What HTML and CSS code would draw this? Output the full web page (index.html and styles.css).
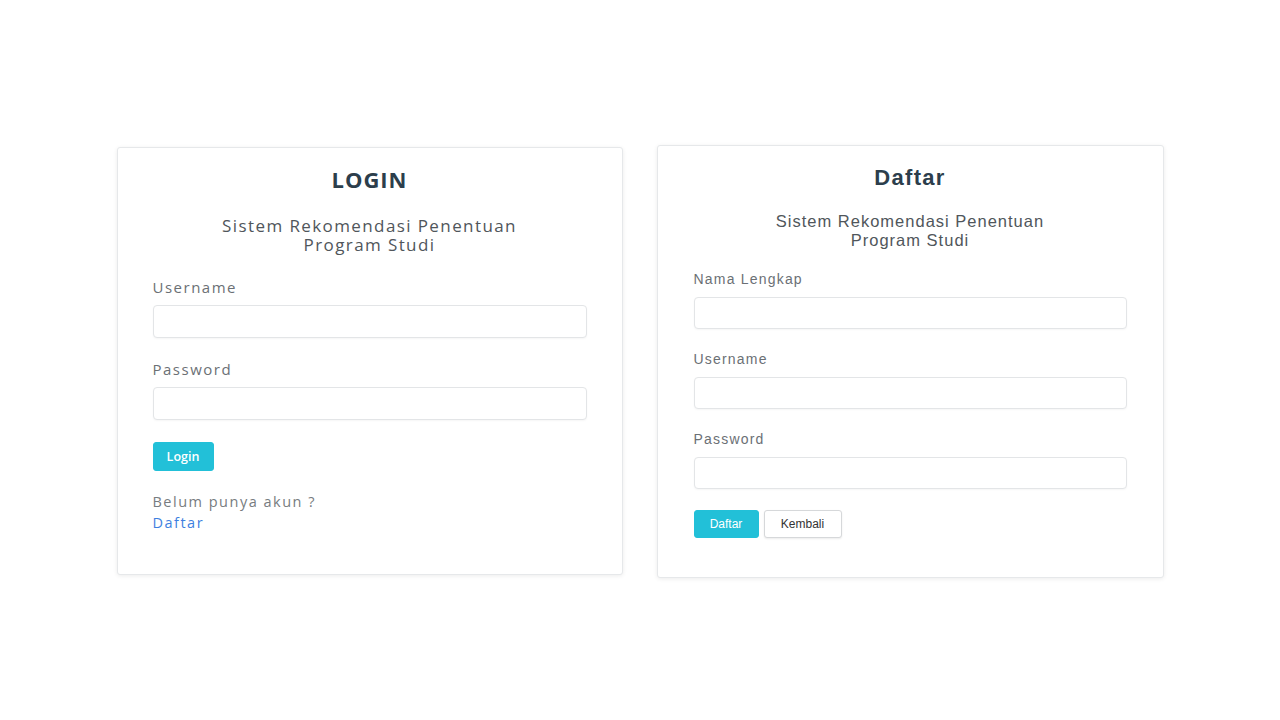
FILE: index.html
```html
<!DOCTYPE html>
<html lang="id">
<head>
    <meta charset="UTF-8">
    <meta name="viewport" content="width=device-width, initial-scale=1.0">
    <title>Login - Sistem Rekomendasi Penentuan Program Studi</title>
    <link rel="stylesheet" href="styles.css">
</head>
<body>

    <div class="page">

        <!-- Login Card -->
        <div class="card card-login">
            <h1 class="card-title">LOGIN</h1>
            <p class="card-sub">Sistem Rekomendasi Penentuan<br>Program Studi</p>

            <label class="field-label">Username</label>
            <input class="field-input" type="text">

            <label class="field-label">Password</label>
            <input class="field-input" type="password">

            <div class="btn-row">
                <button class="btn btn-info">Login</button>
            </div>

            <p class="note">Belum punya akun ?<br><a href="#">Daftar</a></p>
        </div>

        <!-- Register Card -->
        <div class="card card-daftar">
            <h1 class="card-title">Daftar</h1>
            <p class="card-sub">Sistem Rekomendasi Penentuan<br>Program Studi</p>

            <label class="field-label">Nama Lengkap</label>
            <input class="field-input" type="text">

            <label class="field-label">Username</label>
            <input class="field-input" type="text">

            <label class="field-label">Password</label>
            <input class="field-input" type="password">

            <div class="btn-row">
                <button class="btn btn-info">Daftar</button>
                <button class="btn btn-light">Kembali</button>
            </div>
        </div>

    </div>

</body>
</html>
```

FILE: styles.css
```css
/* Base */
body {
    margin: 0;
    padding: 0;
    background-color: #ffffff;
    font-family: 'Open Sans', 'Liberation Sans', sans-serif;
}

.page {
    height: 720px;
    padding-top: 2px;
    box-sizing: border-box;
    display: flex;
    justify-content: center;
    align-items: center;
    gap: 34px;
}

/* Cards */
.card {
    background-color: #ffffff;
    border: 1px solid #e6e8ea;
    border-radius: 3px;
    box-shadow: 0 1px 4px rgba(0, 0, 0, 0.08);
    display: flex;
    flex-direction: column;
    box-sizing: border-box;
}

.card-login {
    width: 506px;
    padding: 18px 35px 41px;
}

.card-daftar {
    width: 507px;
    padding: 19px 36px 39px;
    font-family: 'Liberation Sans', Arial, sans-serif;
}

.card-title {
    margin: 0;
    text-align: center;
    font-size: 22px;
    line-height: 26px;
    font-weight: bold;
    letter-spacing: 1px;
    color: #2c3e4c;
}

.card-daftar .card-title {
    letter-spacing: 1.3px;
}

.card-sub {
    margin: 24px 0 23px;
    text-align: center;
    font-size: 17px;
    line-height: 19px;
    letter-spacing: 1.4px;
    color: #50565b;
}

.card-daftar .card-sub {
    margin: 21px 0 20px;
    font-size: 16.5px;
    letter-spacing: 1px;
}

/* Form fields */
.field-label {
    font-size: 15px;
    line-height: 20px;
    letter-spacing: 1.5px;
    color: #6b7075;
}

.card-daftar .field-label {
    font-size: 14px;
    line-height: 19px;
    letter-spacing: 1.2px;
}

.field-input {
    margin: 8px 0 21px;
    height: 33px;
    padding: 0 10px;
    border: 1px solid #e3e5e7;
    border-radius: 4px;
    box-sizing: border-box;
    box-shadow: 0 1px 2px rgba(0, 0, 0, 0.04);
    width: 100%;
}

.card-daftar .field-input {
    height: 32px;
    margin: 8px 0 21px;
}

/* Buttons */
.btn-row {
    display: flex;
    gap: 5px;
    margin-top: 1px;
}

.card-daftar .btn-row {
    margin-top: 0;
}

.btn {
    font-family: inherit;
    font-size: 12.5px;
    height: 29px;
    padding: 0 13px;
    border-radius: 3px;
    cursor: pointer;
}

.card-login .btn-info {
    width: 61px;
    font-weight: 600;
}

.card-daftar .btn {
    height: 28px;
    font-size: 12px;
}

.btn-info {
    background-color: #22c0d8;
    border: 1px solid #22c0d8;
    color: #ffffff;
}

.card-daftar .btn-info {
    width: 65px;
}

.btn-light {
    background-color: #ffffff;
    border: 1px solid #d6d8da;
    color: #333333;
    width: 78px;
    box-shadow: 0 1px 2px rgba(0, 0, 0, 0.08);
}

/* Register note */
.note {
    margin: 20px 0 0;
    font-size: 14.5px;
    line-height: 21px;
    letter-spacing: 1.5px;
    color: #777c80;
}

.note a {
    color: #3d7fe0;
    text-decoration: none;
}
```
